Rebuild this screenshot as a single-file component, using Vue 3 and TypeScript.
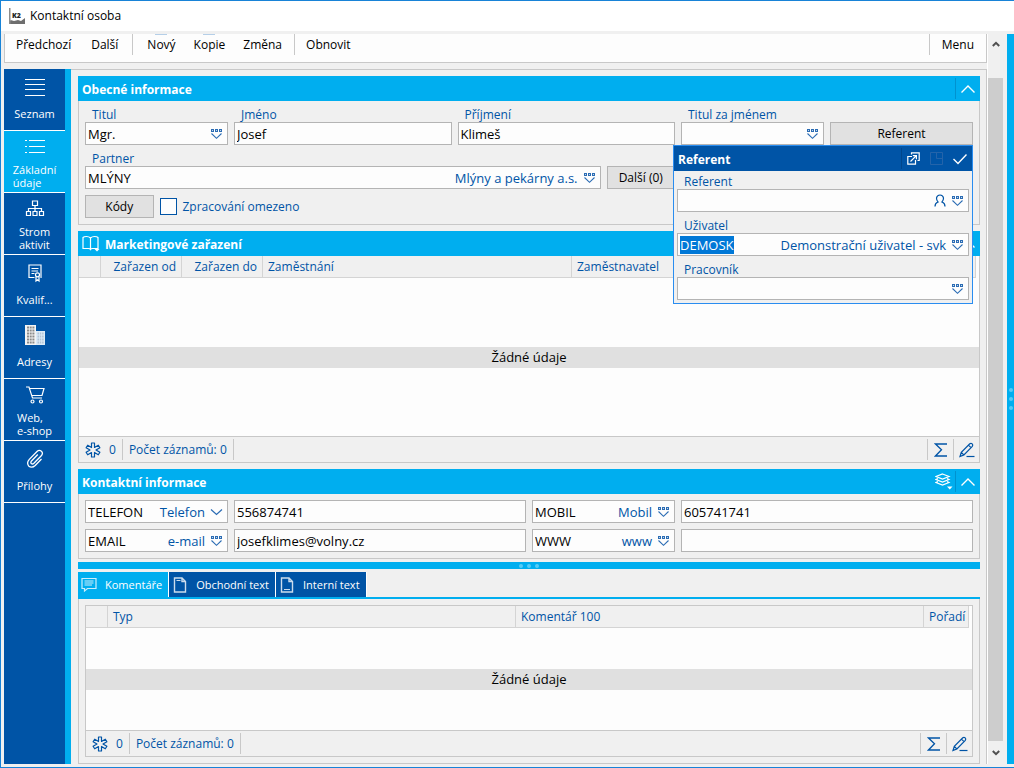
<script setup lang="ts">
import { ref } from 'vue'

interface NavItem {
  icon: string
  lines: string[]
}

const navItems: NavItem[] = [
  { icon: 'menu', lines: ['Seznam'] },
  { icon: 'list', lines: ['Základní', 'údaje'] },
  { icon: 'tree', lines: ['Strom', 'aktivit'] },
  { icon: 'cert', lines: ['Kvalif...'] },
  { icon: 'building', lines: ['Adresy'] },
  { icon: 'cart', lines: ['Web,', 'e-shop'] },
  { icon: 'clip', lines: ['Přílohy'] },
]
const activeNav = ref(1)

const tabs = [
  { icon: 'comment', label: 'Komentáře' },
  { icon: 'doc-top', label: 'Obchodní text' },
  { icon: 'doc-bottom', label: 'Interní text' },
]
const activeTab = ref(0)

const person = ref({
  title: 'Mgr.',
  firstName: 'Josef',
  lastName: 'Klimeš',
  titleAfter: '',
  partner: 'MLÝNY',
  restricted: false,
})
const referent = ref({ referent: '', user: 'DEMOSK', worker: '' })
const contacts = ref([
  { type: 'TELEFON', name: 'Telefon', icon: 'chevron', value: '556874741' },
  { type: 'MOBIL', name: 'Mobil', icon: 'pick', value: '605741741' },
  { type: 'EMAIL', name: 'e-mail', icon: 'pick', value: 'josefklimes@volny.cz' },
  { type: 'WWW', name: 'www', icon: 'pick', value: '' },
])
</script>

<template>
  <div class="window">
    <svg class="sprite" aria-hidden="true">
      <symbol id="pick" viewBox="0 0 13 12">
        <path d="M1 1h3v3h-3zM5 1h3v3h-3zM9 1h3v3h-3z" fill="#2b6cb4" />
        <path d="M2 2h1v1h-1zM6 2h1v1h-1zM10 2h1v1h-1z" fill="#c4d8ec" />
        <path d="M1.500 5.500L6.500 10.300L11.500 5.500" fill="none" stroke="#2b6cb4" stroke-width="1.100" />
      </symbol>
      <symbol id="chevron" viewBox="0 0 13 12">
        <path d="M1 3.500L6.500 8.500L12 3.500" fill="none" stroke="#2b6cb4" stroke-width="1.200" />
      </symbol>
      <symbol id="collapse" viewBox="0 0 14 8">
        <path d="M.5 7.500L7 1L13.500 7.500" fill="none" stroke="currentColor" stroke-width="1.400" />
      </symbol>
      <symbol id="person" viewBox="0 0 12 13">
        <path d="M1 12.500Q1 9 4 8Q2.500 6.500 2.500 4Q3 1 6 1Q9 1 9.500 4Q9.500 6.500 8 8Q11 9 11 12.500" fill="none" stroke="currentColor" stroke-width="1.200" />
      </symbol>
      <symbol id="external" viewBox="0 0 13 13">
        <g fill="none" stroke="currentColor" stroke-width="1.200">
          <path d="M4.500 2.500V.8H12.200V8.500H10.500" />
          <path d="M5 4.500H.8V12.200H8.500V8" />
          <path d="M3.500 9.500L9.300 3.700M5.800 3.600H9.400V7.200" />
        </g>
      </symbol>
      <symbol id="dock" viewBox="0 0 13 13">
        <path d="M.5 .5H12.500V12.500H.5zM6.500 .5V6.500H12.500" fill="none" stroke="#2464aa" />
      </symbol>
      <symbol id="check" viewBox="0 0 14 12">
        <path d="M.5 6L5 10.500L13.500 1.500" fill="none" stroke="currentColor" stroke-width="1.400" />
      </symbol>
      <symbol id="book" viewBox="0 0 18 17">
        <g fill="none" stroke="currentColor" stroke-width="1.200">
          <path d="M8.500 3Q7 1.500 4.500 1.500Q2 1.500 1 2.500V13.500H6.500Q8 13.500 8.500 14.500Q9 13.500 10.500 13.500H16V2.500Q15 1.500 12.500 1.500Q10 1.500 8.500 3V14" />
        </g>
        <path d="M12.500 14H17.500L15 16.500z" fill="currentColor" />
      </symbol>
      <symbol id="layers" viewBox="0 0 18 17">
        <g fill="none" stroke="currentColor" stroke-width="1.200">
          <path d="M7.500 1L14 3.500L7.500 6L1 3.500z" />
          <path d="M3 5.500L1 6.500L7.500 9L14 6.500L12 5.500" />
          <path d="M3 8.500L1 9.500L7.500 12L14 9.500L12 8.500" />
        </g>
        <path d="M12 13.500H17.500L14.800 16.500z" fill="currentColor" />
      </symbol>
      <symbol id="asterisk" viewBox="0 0 16 16">
        <path d="M6.500 1H9.500V5.500L13.300 3.200L14.900 5.800L11 8L14.900 10.200L13.300 12.800L9.500 10.500V15H6.500V10.500L2.700 12.800L1.100 10.200L5 8L1.100 5.800L2.700 3.200L6.500 5.500z" fill="none" stroke="currentColor" stroke-linejoin="round" stroke-width="1.200" />
      </symbol>
      <symbol id="sigma" viewBox="0 0 14 14">
        <path d="M13 1H1.500L7.500 6.800L1.500 13H13" fill="none" stroke="currentColor" stroke-width="1.300" />
      </symbol>
      <symbol id="pencil" viewBox="0 0 16 16">
        <g fill="none" stroke="currentColor" stroke-width="1.200">
          <path d="M1 14.500L2.300 10.300L10.800 1.800Q12 .8 13.200 1.900Q14.300 3 13.300 4.300L4.900 12.900zM9.500 3.100L12 5.700M2.300 10.300L4.900 12.900" />
          <path d="M7.500 14.500H15.500" />
        </g>
      </symbol>
      <symbol id="comment" viewBox="0 0 16 15">
        <g fill="none" stroke="currentColor" stroke-width="1.200" opacity=".8">
          <path d="M1 1H15V11H6.500L3.500 13.500V11H1z" />
          <path d="M3.500 3.500H12.500M3.500 5.500H12.500M3.500 7.500H11" />
        </g>
      </symbol>
      <symbol id="doc-top" viewBox="0 0 13 16">
        <g fill="none" stroke="currentColor" opacity=".8">
          <path d="M1 1H8.500L12 4.500V15H1zM8.500 1V4.500H12" stroke-width="1.400" />
          <path d="M3 3.500H7" />
        </g>
      </symbol>
      <symbol id="doc-bottom" viewBox="0 0 13 16">
        <g fill="none" stroke="currentColor" opacity=".8">
          <path d="M1 1H8.500L12 4.500V15H1zM8.500 1V4.500H12" stroke-width="1.400" />
          <path d="M3.500 12.500H9.500" />
        </g>
      </symbol>
      <symbol id="menu" viewBox="0 0 20 20">
        <path d="M0 2.500H20M0 7.500H20M0 12.500H20M0 18.500H20" fill="none" stroke="currentColor" />
      </symbol>
      <symbol id="list" viewBox="0 0 20 20">
        <path d="M4 3.500H20M4 9.500H20M4 15.500H20M0 3.500H2M0 9.500H2M0 15.500H2" fill="none" stroke="currentColor" />
      </symbol>
      <symbol id="tree" viewBox="0 0 20 20">
        <g fill="none" stroke="currentColor" stroke-width="1.200">
          <path d="M7.500 2H12.500V6.500H7.500zM1.500 12.500H5.500V16.500H1.500zM8 12.500H12V16.500H8zM14.500 12.500H18.500V16.500H14.500z" />
          <path d="M10 6.500V12.500M3.500 12.500V9.500H16.500V12.500" />
        </g>
      </symbol>
      <symbol id="cert" viewBox="0 0 20 20">
        <g fill="none" stroke="currentColor" stroke-width="1.200">
          <path d="M9.500 14.500H4V2H16V14.500H15.500M6.500 5.500H13.500M6.500 8H13M6.500 10.500H9.500" />
          <circle cx="12.500" cy="11.800" r="2" />
          <path d="M11 13.500V18L12.500 16.800L14 18V13.500" />
        </g>
      </symbol>
      <symbol id="building" viewBox="0 0 20 20">
        <path d="M0 0H11V20H0z" fill="#f4f4f4" />
        <path d="M11 6H20V20H11z" fill="#dcebf7" />
        <path d="M2 2.500H9.500M2 5.500H9.500M2 8.500H9.500M2 11.500H9.500M2 14.500H9.500M2 17.500H9.500" stroke="#8b8b8b" stroke-width="2" stroke-dasharray="2 .7" />
        <path d="M12.500 8.500H19M12.500 11.500H19M12.500 14.500H19M12.500 17.500H19" stroke="#b3c4d6" stroke-width="2" stroke-dasharray="1.500 .8" />
      </symbol>
      <symbol id="cart" viewBox="0 0 20 20">
        <g fill="none" stroke="currentColor" stroke-width="1.200">
          <path d="M1 2H4L7.500 13H17M4.800 3.500H19L17 10.500H6.800" />
          <circle cx="7.500" cy="16.500" r="1.500" />
          <circle cx="16" cy="16.500" r="1.500" />
        </g>
      </symbol>
      <symbol id="clip" viewBox="0 0 20 20">
        <path d="M12.800 5.500L6.300 12.200Q5.300 13.800 6.500 14.700Q7.600 15.500 8.900 14.300L16.500 6.500Q18.400 4 16.400 2.200Q14.200 .5 12 2.500L4.300 10.400Q1.300 13.700 3.600 16.900Q6.800 19.600 10.200 16.500L16.500 10" fill="none" stroke="currentColor" stroke-width="1.300" />
      </symbol>
      <symbol id="arrow" viewBox="0 0 8 8">
        <path d="M.8 6L4 2.800L7.200 6" fill="none" stroke="#505050" stroke-width="2" />
      </symbol>
    </svg>

    <header class="titlebar">
      <svg class="logo" width="16" height="16" viewBox="0 0 16 16" aria-hidden="true">
        <path d="M0 0H1.500V13H16V16H0z" fill="#8c8c8c" />
        <path d="M1.500 12L5 13L9 12L12 13L16 10V16H1.500z" fill="#6e6e6e" />
        <text x="3" y="10" font-family="Open Sans, sans-serif" font-size="7" font-weight="800" fill="#222">K2</text>
      </svg>
      <h1>Kontaktní osoba</h1>
    </header>

    <div class="frame">
      <div class="workspace">
        <nav class="toolbar" aria-label="Akce">
          <div class="tool-group">
            <button type="button">Předchozí</button>
            <button type="button">Další</button>
          </div>
          <div class="tool-group">
            <button type="button" class="marked">Nový</button>
            <button type="button" class="marked">Kopie</button>
            <button type="button">Změna</button>
          </div>
          <div class="tool-group">
            <button type="button">Obnovit</button>
          </div>
          <div class="tool-group tool-menu">
            <button type="button">Menu</button>
          </div>
        </nav>

        <div class="content">
          <nav class="sidebar" aria-label="Sekce">
            <button
              v-for="(item, i) in navItems"
              :key="item.icon"
              type="button"
              class="nav-item"
              :class="{ active: i === activeNav, double: item.lines.length > 1 }"
              @click="activeNav = i"
            >
              <svg width="20" height="20" aria-hidden="true"><use :href="'#' + item.icon" /></svg>
              <span class="nav-label"><span v-for="line in item.lines" :key="line">{{ line }}</span></span>
            </button>
          </nav>

          <main class="panel">
            <section class="group">
              <header class="bar">
                <h2>Obecné informace</h2>
                <button type="button" class="bar-btn" aria-label="Sbalit obecné informace">
                  <svg width="14" height="8"><use href="#collapse" /></svg>
                </button>
              </header>
              <div class="group-body general">
                <div class="cell span2">
                  <label for="title">Titul</label>
                  <div class="field">
                    <input id="title" v-model="person.title" type="text" />
                    <button type="button" aria-label="Vybrat titul"><svg width="13" height="12"><use href="#pick" /></svg></button>
                  </div>
                </div>
                <div class="cell span3">
                  <label for="first">Jméno</label>
                  <div class="field"><input id="first" v-model="person.firstName" type="text" /></div>
                </div>
                <div class="cell span3">
                  <label for="last">Příjmení</label>
                  <div class="field"><input id="last" v-model="person.lastName" type="text" /></div>
                </div>
                <div class="cell span2">
                  <label for="after">Titul za jménem</label>
                  <div class="field">
                    <input id="after" v-model="person.titleAfter" type="text" />
                    <button type="button" aria-label="Vybrat titul za jménem"><svg width="13" height="12"><use href="#pick" /></svg></button>
                  </div>
                </div>
                <div class="span2 anchor">
                  <button type="button" class="push">Referent</button>
                  <div class="popup" role="dialog" aria-labelledby="popup-title">
                    <header class="popup-bar">
                      <h2 id="popup-title">Referent</h2>
                      <div class="popup-tools">
                        <button type="button" aria-label="Otevřít"><svg width="13" height="13"><use href="#external" /></svg></button>
                        <button type="button" aria-label="Ukotvit" disabled><svg width="13" height="13"><use href="#dock" /></svg></button>
                        <button type="button" aria-label="Potvrdit"><svg width="14" height="12"><use href="#check" /></svg></button>
                      </div>
                    </header>
                    <div class="popup-body">
                      <label for="referent">Referent</label>
                      <div class="field">
                        <input id="referent" v-model="referent.referent" type="text" />
                        <button type="button" aria-label="Osoba"><svg width="12" height="13"><use href="#person" /></svg></button>
                        <button type="button" aria-label="Vybrat referenta"><svg width="13" height="12"><use href="#pick" /></svg></button>
                      </div>
                      <label for="user">Uživatel</label>
                      <div class="field">
                        <input id="user" v-model="referent.user" class="selected" type="text" />
                        <span class="hint">Demonstrační uživatel - svk</span>
                        <button type="button" aria-label="Vybrat uživatele"><svg width="13" height="12"><use href="#pick" /></svg></button>
                      </div>
                      <label for="worker">Pracovník</label>
                      <div class="field">
                        <input id="worker" v-model="referent.worker" type="text" />
                        <button type="button" aria-label="Vybrat pracovníka"><svg width="13" height="12"><use href="#pick" /></svg></button>
                      </div>
                    </div>
                  </div>
                </div>

                <div class="cell span7">
                  <label for="partner">Partner</label>
                  <div class="field">
                    <input id="partner" v-model="person.partner" type="text" />
                    <span class="hint">Mlýny a pekárny a.s.</span>
                    <button type="button" aria-label="Vybrat partnera"><svg width="13" height="12"><use href="#pick" /></svg></button>
                  </div>
                </div>
                <button type="button" class="push">Další (0)</button>

                <button type="button" class="push codes">Kódy</button>
                <label class="check span4">
                  <input v-model="person.restricted" type="checkbox" />
                  Zpracování omezeno
                </label>
              </div>
            </section>

            <section class="group">
              <header class="bar">
                <svg width="18" height="17" aria-hidden="true"><use href="#book" /></svg>
                <h2>Marketingové zařazení</h2>
                <button type="button" class="bar-btn" aria-label="Sbalit marketingové zařazení">
                  <svg width="14" height="8"><use href="#collapse" /></svg>
                </button>
              </header>
              <div class="grid-box attached">
                <table class="marketing">
                  <colgroup><col class="w-mark" /><col class="w-date" /><col class="w-date" /><col class="w-job" /><col /><col class="w-end" /></colgroup>
                  <thead>
                    <tr>
                      <th></th>
                      <th class="right">Zařazen od</th>
                      <th class="right">Zařazen do</th>
                      <th>Zaměstnání</th>
                      <th>Zaměstnavatel</th>
                      <th class="end"></th>
                    </tr>
                  </thead>
                  <tbody>
                    <tr><td colspan="6"><p class="empty">Žádné údaje</p></td></tr>
                  </tbody>
                </table>
                <footer class="status">
                  <span class="status-cell"><svg width="16" height="16" aria-hidden="true"><use href="#asterisk" /></svg>0</span>
                  <span class="status-cell">Počet záznamů: 0</span>
                  <button type="button" aria-label="Součet"><svg width="14" height="14"><use href="#sigma" /></svg></button>
                  <button type="button" aria-label="Upravit"><svg width="16" height="16"><use href="#pencil" /></svg></button>
                </footer>
              </div>
            </section>

            <section class="group contacts-group">
              <header class="bar">
                <h2>Kontaktní informace</h2>
                <button type="button" class="layers" aria-label="Vrstvy"><svg width="18" height="17"><use href="#layers" /></svg></button>
                <button type="button" class="bar-btn" aria-label="Sbalit kontaktní informace">
                  <svg width="14" height="8"><use href="#collapse" /></svg>
                </button>
              </header>
              <div class="group-body contacts">
                <template v-for="c in contacts" :key="c.name">
                  <div class="field span2">
                    <input v-model="c.type" type="text" :aria-label="'Typ kontaktu ' + c.name" />
                    <span class="hint">{{ c.name }}</span>
                    <button type="button" :aria-label="'Vybrat typ ' + c.name"><svg width="13" height="12"><use :href="'#' + c.icon" /></svg></button>
                  </div>
                  <div class="field span4"><input v-model="c.value" type="text" :aria-label="c.name" /></div>
                </template>
              </div>
            </section>

            <div class="splitter" role="separator"><i></i><i></i><i></i></div>

            <section class="notes">
              <div class="tabs" role="tablist">
                <button
                  v-for="(tab, i) in tabs"
                  :key="tab.label"
                  type="button"
                  role="tab"
                  :aria-selected="i === activeTab"
                  :class="{ active: i === activeTab }"
                  @click="activeTab = i"
                >
                  <svg width="16" height="16" aria-hidden="true"><use :href="'#' + tab.icon" /></svg>
                  {{ tab.label }}
                </button>
              </div>
              <div class="notes-body">
                <div class="grid-box">
                  <table>
                    <colgroup><col class="w-mark" /><col /><col /><col class="w-order" /><col class="w-end" /></colgroup>
                    <thead>
                      <tr>
                        <th></th>
                        <th>Typ</th>
                        <th>Komentář 100</th>
                        <th>Pořadí</th>
                        <th class="end"></th>
                      </tr>
                    </thead>
                    <tbody>
                      <tr><td colspan="5"><p class="empty">Žádné údaje</p></td></tr>
                    </tbody>
                  </table>
                  <footer class="status">
                    <span class="status-cell"><svg width="16" height="16" aria-hidden="true"><use href="#asterisk" /></svg>0</span>
                    <span class="status-cell">Počet záznamů: 0</span>
                    <button type="button" aria-label="Součet"><svg width="14" height="14"><use href="#sigma" /></svg></button>
                    <button type="button" aria-label="Upravit"><svg width="16" height="16"><use href="#pencil" /></svg></button>
                  </footer>
                </div>
              </div>
            </section>
          </main>
        </div>
      </div>

      <div class="scrollbar">
        <button type="button" class="up" aria-label="Nahoru"><svg width="8" height="8"><use href="#arrow" /></svg></button>
        <div class="thumb"></div>
        <button type="button" class="down" aria-label="Dolů"><svg width="8" height="8"><use href="#arrow" /></svg></button>
      </div>
      <div class="side-grip"><i></i><i></i><i></i></div>
    </div>
  </div>
</template>

<style>
body {
  margin: 0;
}
</style>

<style scoped>
.window {
  --blue: #0054a6;
  --cyan: #00aeef;
  --line: #c8c8c8;
  --face: #f0f0f0;
  --paper: #fdfdfd;
  box-sizing: border-box;
  display: flex;
  flex-direction: column;
  min-height: 100vh;
  border: 1px solid #1883d7;
  border-right: 0;
  background: var(--face);
  color: #000;
  font: 12px/16px "Open Sans", "Noto Sans", sans-serif;
}
.window *,
.window *::before {
  box-sizing: border-box;
}
.sprite {
  position: absolute;
  width: 0;
  height: 0;
}
svg {
  display: block;
  flex: none;
}
button {
  margin: 0;
  padding: 0;
  border: 0;
  background: none;
  color: inherit;
  font: inherit;
}
h1,
h2,
p {
  margin: 0;
}
.titlebar {
  display: flex;
  align-items: center;
  gap: 5px;
  height: 30px;
  padding-left: 8px;
  background: #fff;
}
h1 {
  font-size: 12px;
  font-weight: 400;
}
.frame {
  display: flex;
  flex: 1;
  padding: 3px 0 3px 3px;
}
.workspace {
  display: flex;
  flex: 1;
  flex-direction: column;
  gap: 6px;
  min-width: 0;
}

.toolbar {
  display: flex;
  height: 29px;
  border: solid var(--line);
  border-width: 0 1px 1px;
  background: var(--paper);
}
.tool-group {
  display: flex;
  gap: 20px;
  height: 21px;
  padding: 0 14px 0 11px;
}
.tool-group + .tool-group {
  padding-left: 14px;
  border-left: 1px solid var(--line);
}
.tool-group:nth-child(2) {
  gap: 18px;
  padding-right: 12px;
}
.tool-group + .tool-group:nth-child(3) {
  padding-left: 11px;
}
.tool-group + .tool-menu {
  margin-left: auto;
  padding: 0 12px;
}
.marked {
  position: relative;
}
.marked::before {
  content: "";
  position: absolute;
  top: 0;
  left: 50%;
  width: 12px;
  height: 1px;
  margin-left: -6px;
  background: #b5cfe8;
}

.content {
  display: flex;
  flex: 1;
}
.sidebar {
  width: 67px;
  border-right: 6px solid var(--cyan);
  background: var(--blue);
}
.nav-item {
  display: flex;
  flex-direction: column;
  align-items: center;
  gap: 10px;
  width: 100%;
  height: 62px;
  padding-top: 8px;
  border-bottom: 1px solid #fff;
  color: #fff;
  font-size: 11px;
  line-height: 13px;
}
.nav-item.double {
  gap: 6px;
  padding-top: 6px;
}
.nav-item.active {
  background: var(--cyan);
}
.nav-label {
  text-align: left;
}
.nav-label span {
  display: block;
}

.panel {
  display: flex;
  flex: 1;
  flex-direction: column;
  min-width: 0;
  padding: 6px 6px 0 7px;
  border: solid var(--line);
  border-width: 1px 1px 0 0;
}
.group {
  margin-bottom: 6px;
}
.contacts-group {
  margin-bottom: 3px;
}
.bar {
  display: flex;
  align-items: center;
  gap: 5px;
  height: 25px;
  padding-left: 4px;
  background: var(--cyan);
  color: #fff;
}
h2 {
  padding-top: 2px;
  font-size: 12px;
  font-weight: 700;
}
.bar-btn {
  display: flex;
  align-items: center;
  justify-content: center;
  width: 25px;
  height: 21px;
  margin-left: auto;
  border-left: 1px solid #0092cf;
}
.layers {
  margin-left: auto;
}
.layers + .bar-btn {
  margin-left: -3px;
}
.group-body {
  display: grid;
  grid-template-columns: repeat(12, minmax(0, 1fr));
  gap: 6px;
  padding: 6px;
  border: solid var(--line);
  border-width: 0 1px 1px;
}
.general {
  row-gap: 4px;
  padding-top: 4px;
  align-items: end;
}
.codes,
.check {
  margin-top: 2px;
}
.span2 { grid-column: span 2; }
.span3 { grid-column: span 3; }
.span4 { grid-column: span 4; }
.span7 { grid-column: span 7; }
.push.codes { grid-column: 1; }

.cell label,
.popup-body label {
  display: block;
  height: 17px;
  padding-left: 7px;
  color: var(--blue);
  line-height: 20px;
}
.field {
  display: flex;
  align-items: center;
  gap: 5px;
  height: 23px;
  padding: 0 4px 0 2px;
  border: 1px solid #b4b4b4;
  background: var(--paper);
  color: var(--blue);
}
.field input {
  flex: 1;
  width: 0;
  min-width: 0;
  height: 18px;
  padding: 0;
  border: 0;
  outline: 0;
  background: transparent;
  color: #000;
  font: inherit;
  font-size: 13px;
}
.field input.selected {
  flex: none;
  field-sizing: content;
  width: auto;
  background: #0078d7;
  color: #fff;
}
.hint {
  margin-left: auto;
  font-size: 13px;
  white-space: nowrap;
}
.push {
  width: 100%;
  height: 23px;
  border: 1px solid #b4b4b4;
  background: #e1e1e1;
}
.check {
  display: flex;
  align-items: center;
  gap: 6px;
  height: 23px;
  color: var(--blue);
}
.check input {
  width: 17px;
  height: 17px;
  margin: 0;
  border: 1px solid var(--blue);
  background: var(--paper);
  appearance: none;
}

.anchor {
  position: relative;
}
.popup {
  position: absolute;
  top: 100%;
  right: 0;
  z-index: 2;
  width: 300px;
  border: 1px solid #2a8df0;
  background: var(--face);
}
.popup-bar {
  display: flex;
  align-items: center;
  justify-content: space-between;
  height: 25px;
  padding-left: 4px;
  background: var(--blue);
  color: #fff;
}
.popup-tools {
  display: flex;
  align-items: center;
  gap: 10px;
  height: 21px;
  padding: 0 5px;
  border-left: 1px solid #00468c;
}
.popup-body {
  padding: 1px 3px 3px;
}
.popup-body .field + label {
  margin-top: 4px;
}

.grid-box {
  display: flex;
  flex: 1;
  flex-direction: column;
  border: 1px solid var(--line);
  background: var(--paper);
}
.attached {
  border-top: 0;
}
table {
  flex: 1;
  width: 100%;
  border-spacing: 0;
  table-layout: fixed;
}
.marketing {
  flex: none;
  height: 180px;
}
.w-mark { width: 22px; }
.w-date { width: 81px; }
.w-job { width: 309px; }
.w-order { width: 45px; }
.w-end { width: 3px; }
th {
  height: 22px;
  padding: 0 5px;
  border: solid #d4d4d4;
  border-width: 0 1px 1px 0;
  background: var(--face);
  color: var(--blue);
  font-weight: 400;
  text-align: left;
  white-space: nowrap;
}
th.right {
  text-align: right;
}
th.end {
  padding: 0;
  border: 0;
  background: var(--paper);
}
td {
  padding: 0;
  vertical-align: middle;
}
.empty {
  height: 21px;
  background: #e0e0e0;
  font-size: 13px;
  line-height: 21px;
  text-align: center;
}
.status {
  display: flex;
  align-items: center;
  height: 26px;
  border-top: 1px solid var(--line);
  background: var(--face);
  color: var(--blue);
}
.status-cell {
  display: flex;
  align-items: center;
  gap: 8px;
  height: 21px;
  padding: 0 6px;
  border-right: 1px solid var(--line);
}
.status button {
  display: flex;
  align-items: center;
  justify-content: center;
  width: 26px;
  height: 21px;
  border-left: 1px solid var(--line);
}
.status-cell + button {
  margin-left: auto;
}

.splitter {
  display: flex;
  align-items: center;
  justify-content: center;
  gap: 4px;
  height: 7px;
  margin-bottom: 3px;
  background: var(--cyan);
}
.splitter i,
.side-grip i {
  width: 4px;
  height: 4px;
  border-radius: 50%;
  background: #55cbf7;
}
.notes {
  display: flex;
  flex: 1;
  flex-direction: column;
}
.tabs {
  display: flex;
  gap: 1px;
  height: 27px;
  border-bottom: 2px solid var(--cyan);
}
.tabs button {
  display: flex;
  align-items: center;
  gap: 8px;
  padding: 0 6px 0 3px;
  box-shadow: 1px 0 #fff;
  background: var(--blue);
  color: #fff;
  font-size: 11px;
}
.tabs button.active {
  background: var(--cyan);
}
.notes-body {
  display: flex;
  flex: 1;
  padding: 6px;
  border: solid var(--line);
  border-width: 0 1px 1px;
}

.scrollbar {
  display: flex;
  flex-direction: column;
  width: 17px;
  border-left: 1px solid #fff;
}
.scrollbar button {
  display: flex;
  align-items: center;
  justify-content: center;
  width: 15px;
  height: 23px;
}
.scrollbar .up {
  height: 44px;
  padding-bottom: 25px;
}
.scrollbar .down svg {
  transform: rotate(180deg);
}
.thumb {
  flex: 1;
  width: 15px;
  background: #cdcdcd;
}
.side-grip {
  display: flex;
  flex-direction: column;
  align-items: center;
  justify-content: center;
  gap: 5px;
  width: 7px;
  margin-left: 3px;
  background: var(--cyan);
}
</style>
